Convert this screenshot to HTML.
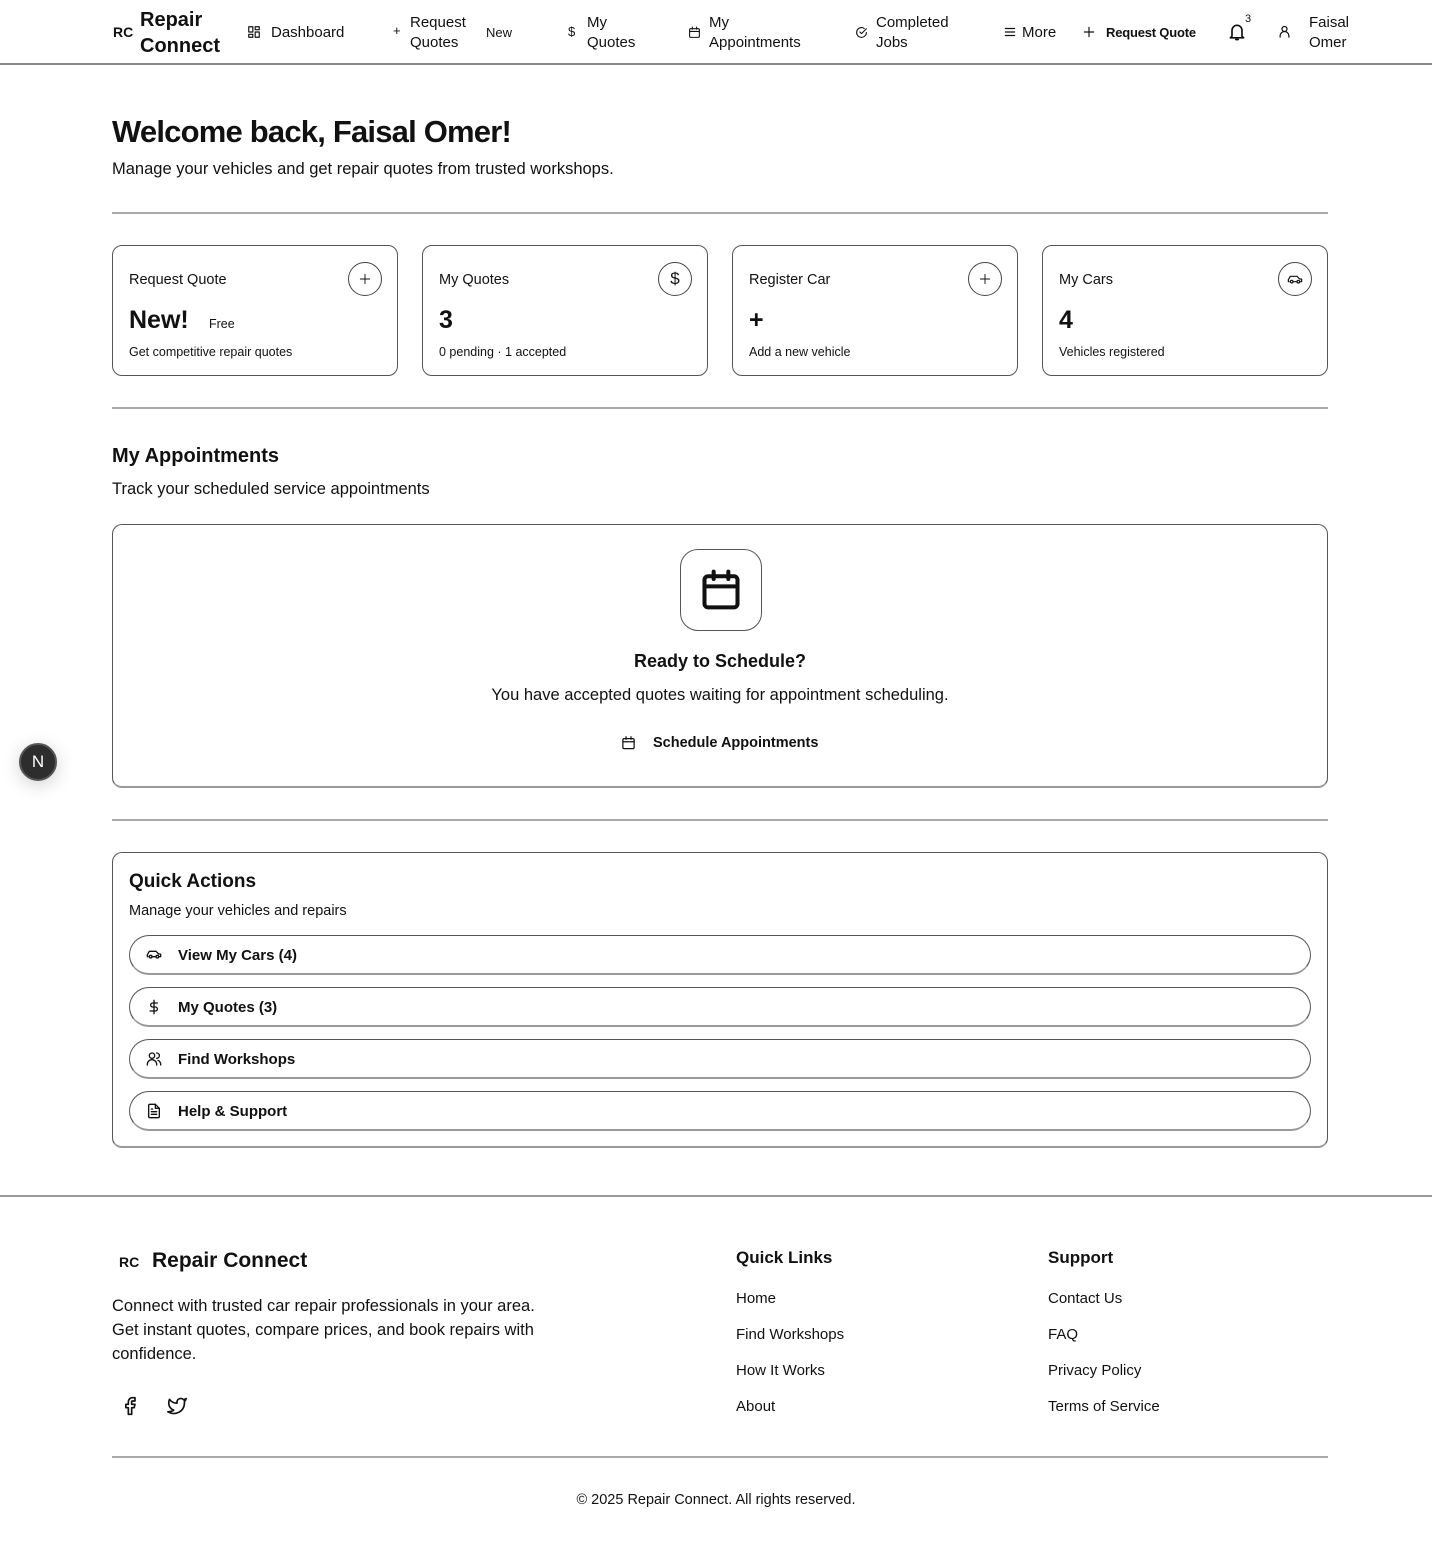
<!DOCTYPE html>
<html><head><meta charset="utf-8"><style>
*{margin:0;padding:0;box-sizing:border-box}
body{width:1432px;height:1557px;position:relative;background:#fff;font-family:"Liberation Sans",Arial,sans-serif;color:#111;overflow:hidden}
.a{position:absolute;white-space:nowrap}
.b{font-weight:bold}
svg{fill:none;stroke:#111;stroke-width:2;stroke-linecap:round;stroke-linejoin:round}
.card{position:absolute;border:1px solid #555;border-radius:10px;background:#fff}
.circ{position:absolute;width:34px;height:34px;border:1px solid #444;border-radius:50%;display:flex;align-items:center;justify-content:center}
.hr{position:absolute;left:112px;width:1216px;height:0;border-top:2px solid #aaa}
.pill{position:absolute;left:16px;width:1182px;height:40px;border:1px solid #555;border-bottom:2px solid #999;border-radius:20px}
.pill svg{position:absolute;left:16px;top:11px}
.pill span{position:absolute;left:48px;top:11px;font-weight:bold;font-size:15px}
.nav{font-size:15px;line-height:20px}
.fl{font-size:15px}
</style></head><body>

<!-- header -->
<div class="a b" style="left:113px;top:24px;font-size:14px">RC</div>
<div class="a b" style="left:140px;top:7px;font-size:20px;line-height:26px">Repair<br>Connect</div>
<svg class="a" style="left:247px;top:25px" width="14" height="14" viewBox="0 0 24 24"><rect x="3" y="3" width="7" height="9"/><rect x="14" y="3" width="7" height="5"/><rect x="14" y="12" width="7" height="9"/><rect x="3" y="16" width="7" height="5"/></svg>
<div class="a nav" style="left:271px;top:23px">Dashboard</div>
<div class="a" style="left:393px;top:23px;font-size:13px">+</div>
<div class="a nav" style="left:410px;top:13px">Request<br>Quotes</div>
<div class="a" style="left:486px;top:25px;font-size:13px">New</div>
<div class="a" style="left:568px;top:24px;font-size:13px">$</div>
<div class="a nav" style="left:587px;top:13px">My<br>Quotes</div>
<svg class="a" style="left:688px;top:26px" width="13" height="13" viewBox="0 0 24 24"><rect x="3" y="5" width="18" height="16" rx="2"/><path d="M8 2v4M16 2v4M3 10h18"/></svg>
<div class="a nav" style="left:709px;top:13px">My<br>Appointments</div>
<svg class="a" style="left:855px;top:26px" width="13" height="13" viewBox="0 0 24 24"><path d="M21 12a9 9 0 1 1-4-7.5"/><path d="M9 11l3 3 9-9"/></svg>
<div class="a nav" style="left:876px;top:13px">Completed<br>Jobs</div>
<svg class="a" style="left:1003px;top:25px" width="14" height="14" viewBox="0 0 24 24"><path d="M4 6h16M4 12h16M4 18h16"/></svg>
<div class="a nav" style="left:1022px;top:23px">More</div>
<svg class="a" style="left:1082px;top:25px" width="14" height="14" viewBox="0 0 24 24"><path d="M12 4v16M4 12h16"/></svg>
<div class="a b" style="left:1106px;top:25px;font-size:13px;letter-spacing:-0.2px">Request Quote</div>
<svg class="a" style="left:1227px;top:21px" width="20" height="22" viewBox="0 0 24 24"><path d="M6 17V10a6 6 0 0 1 12 0v7l2 2H4z"/><path d="M10.5 21h3"/></svg>
<div class="a" style="left:1245px;top:13px;font-size:11px">3</div>
<svg class="a" style="left:1277px;top:24px" width="15" height="15" viewBox="0 0 24 24"><circle cx="12" cy="8" r="4"/><path d="M5 21v-2a7 7 0 0 1 14 0v2"/></svg>
<div class="a nav" style="left:1309px;top:13px">Faisal<br>Omer</div>
<div class="a" style="left:0;top:63px;width:1432px;border-top:2px solid #888"></div>

<!-- welcome -->
<div class="a b" style="left:112px;top:114px;font-size:31px;letter-spacing:-0.8px">Welcome back, Faisal Omer!</div>
<div class="a" style="left:112px;top:160px;font-size:16.5px">Manage your vehicles and get repair quotes from trusted workshops.</div>
<div class="hr" style="top:212px"></div>

<!-- stat cards -->
<div class="card" style="left:112px;top:245px;width:286px;height:131px">
 <div class="a" style="left:16px;top:26px;font-size:14.5px">Request Quote</div>
 <div class="circ" style="left:235px;top:16px"><svg width="14" height="14" viewBox="0 0 24 24" style="stroke-width:1.6"><path d="M12 4v16M4 12h16"/></svg></div>
 <div class="a b" style="left:16px;top:60px;font-size:25px">New!</div>
 <div class="a" style="left:96px;top:71px;font-size:12.5px">Free</div>
 <div class="a" style="left:16px;top:99px;font-size:12.5px">Get competitive repair quotes</div>
</div>
<div class="card" style="left:422px;top:245px;width:286px;height:131px">
 <div class="a" style="left:16px;top:26px;font-size:14.5px">My Quotes</div>
 <div class="circ" style="left:235px;top:16px;font-size:17px">$</div>
 <div class="a b" style="left:16px;top:60px;font-size:25px">3</div>
 <div class="a" style="left:16px;top:99px;font-size:12.5px">0 pending · 1 accepted</div>
</div>
<div class="card" style="left:732px;top:245px;width:286px;height:131px">
 <div class="a" style="left:16px;top:26px;font-size:14.5px">Register Car</div>
 <div class="circ" style="left:235px;top:16px"><svg width="14" height="14" viewBox="0 0 24 24" style="stroke-width:1.6"><path d="M12 4v16M4 12h16"/></svg></div>
 <div class="a b" style="left:16px;top:60px;font-size:25px">+</div>
 <div class="a" style="left:16px;top:99px;font-size:12.5px">Add a new vehicle</div>
</div>
<div class="card" style="left:1042px;top:245px;width:286px;height:131px">
 <div class="a" style="left:16px;top:26px;font-size:14.5px">My Cars</div>
 <div class="circ" style="left:235px;top:16px"><svg width="16" height="12" viewBox="0 0 24 16" style="stroke-width:1.8"><path d="M3 12H2V9l3-5h10l4 4h2a1 1 0 0 1 1 1v3h-2"/><circle cx="7" cy="12" r="2"/><circle cx="17" cy="12" r="2"/><path d="M9 12h6"/></svg></div>
 <div class="a b" style="left:16px;top:60px;font-size:25px">4</div>
 <div class="a" style="left:16px;top:99px;font-size:12.5px">Vehicles registered</div>
</div>
<div class="hr" style="top:407px"></div>

<!-- appointments -->
<div class="a b" style="left:112px;top:445px;font-size:20px">My Appointments</div>
<div class="a" style="left:112px;top:480px;font-size:16.5px">Track your scheduled service appointments</div>
<div class="card" style="left:112px;top:524px;width:1216px;height:264px;border-bottom:2px solid #999">
 <div class="a" style="left:567px;top:24px;width:82px;height:82px;border:1px solid #555;border-radius:18px;display:flex;align-items:center;justify-content:center">
  <svg width="44" height="46" viewBox="0 0 24 24" style="stroke-width:2.2"><rect x="3" y="4.5" width="18" height="17" rx="2"/><path d="M8 2v4M16 2v4M3 10h18"/></svg>
 </div>
 <div class="a b" style="left:0;width:1214px;text-align:center;top:126px;font-size:18px">Ready to Schedule?</div>
 <div class="a" style="left:0;width:1214px;text-align:center;top:161px;font-size:16.5px">You have accepted quotes waiting for appointment scheduling.</div>
 <svg class="a" style="left:508px;top:210px" width="15" height="16" viewBox="0 0 24 24"><rect x="3" y="5" width="18" height="16" rx="2"/><path d="M8 2v4M16 2v4M3 10h18"/></svg>
 <div class="a b" style="left:540px;top:210px;font-size:14.5px">Schedule Appointments</div>
</div>
<div class="a" style="left:19px;top:743px;width:38px;height:38px;border-radius:50%;background:#2d2d2d;border:2px solid #555;box-shadow:0 4px 18px rgba(0,0,0,.18);color:#fff;font-size:17px;text-align:center;line-height:34px">N</div>
<div class="hr" style="top:819px"></div>

<!-- quick actions -->
<div class="card" style="left:112px;top:852px;width:1216px;height:296px;border-bottom:2px solid #999">
 <div class="a b" style="left:16px;top:18px;font-size:19px">Quick Actions</div>
 <div class="a" style="left:16px;top:50px;font-size:14.5px">Manage your vehicles and repairs</div>
 <div class="pill" style="top:82px"><svg width="16" height="14" viewBox="0 0 24 16"><path d="M3 12H2V9l3-5h10l4 4h2a1 1 0 0 1 1 1v3h-2"/><circle cx="7" cy="12" r="2"/><circle cx="17" cy="12" r="2"/><path d="M9 12h6"/></svg><span>View My Cars (4)</span></div>
 <div class="pill" style="top:134px"><svg width="16" height="16" viewBox="0 0 24 24"><path d="M12 2v20M17 6H10a3 3 0 0 0 0 6h4a3 3 0 0 1 0 6H6"/></svg><span>My Quotes (3)</span></div>
 <div class="pill" style="top:186px"><svg width="16" height="16" viewBox="0 0 24 24"><circle cx="9" cy="7" r="4"/><path d="M2 21v-1a7 7 0 0 1 14 0v1M16 3a4 4 0 0 1 0 8M22 21v-1a7 7 0 0 0-4-6"/></svg><span>Find Workshops</span></div>
 <div class="pill" style="top:238px"><svg width="16" height="16" viewBox="0 0 24 24"><path d="M14 2H6a2 2 0 0 0-2 2v16a2 2 0 0 0 2 2h12a2 2 0 0 0 2-2V8z"/><path d="M14 2v6h6M8 13h8M8 17h8M8 9h2"/></svg><span>Help &amp; Support</span></div>
</div>

<!-- footer -->
<div class="a" style="left:0;top:1195px;width:1432px;border-top:2px solid #999"></div>
<div class="a b" style="left:119px;top:1254px;font-size:14px">RC</div>
<div class="a b" style="left:152px;top:1249px;font-size:21px">Repair Connect</div>
<div class="a" style="left:112px;top:1294px;font-size:16.5px;line-height:24px">Connect with trusted car repair professionals in your area.<br>Get instant quotes, compare prices, and book repairs with<br>confidence.</div>
<svg class="a" style="left:120px;top:1396px" width="20" height="20" viewBox="0 0 24 24"><path d="M18 2h-3a5 5 0 0 0-5 5v3H7v4h3v8h4v-8h3l1-4h-4V7a1 1 0 0 1 1-1h3z"/></svg>
<svg class="a" style="left:166px;top:1396px" width="22" height="20" viewBox="0 0 24 24"><path d="M23 3a10.9 10.9 0 0 1-3.14 1.53 4.48 4.48 0 0 0-7.86 3v1A10.66 10.66 0 0 1 3 4s-4 9 5 13a11.64 11.64 0 0 1-7 2c9 5 20 0 20-11.5a4.5 4.5 0 0 0-.08-.83A7.72 7.72 0 0 0 23 3z"/></svg>
<div class="a b" style="left:736px;top:1248px;font-size:17px">Quick Links</div>
<div class="a fl" style="left:736px;top:1290px">Home</div>
<div class="a fl" style="left:736px;top:1326px">Find Workshops</div>
<div class="a fl" style="left:736px;top:1362px">How It Works</div>
<div class="a fl" style="left:736px;top:1398px">About</div>
<div class="a b" style="left:1048px;top:1248px;font-size:17px">Support</div>
<div class="a fl" style="left:1048px;top:1290px">Contact Us</div>
<div class="a fl" style="left:1048px;top:1326px">FAQ</div>
<div class="a fl" style="left:1048px;top:1362px">Privacy Policy</div>
<div class="a fl" style="left:1048px;top:1398px">Terms of Service</div>
<div class="hr" style="top:1456px"></div>
<div class="a" style="left:0;width:1432px;text-align:center;top:1492px;font-size:14.5px">© 2025 Repair Connect. All rights reserved.</div>
</body></html>
